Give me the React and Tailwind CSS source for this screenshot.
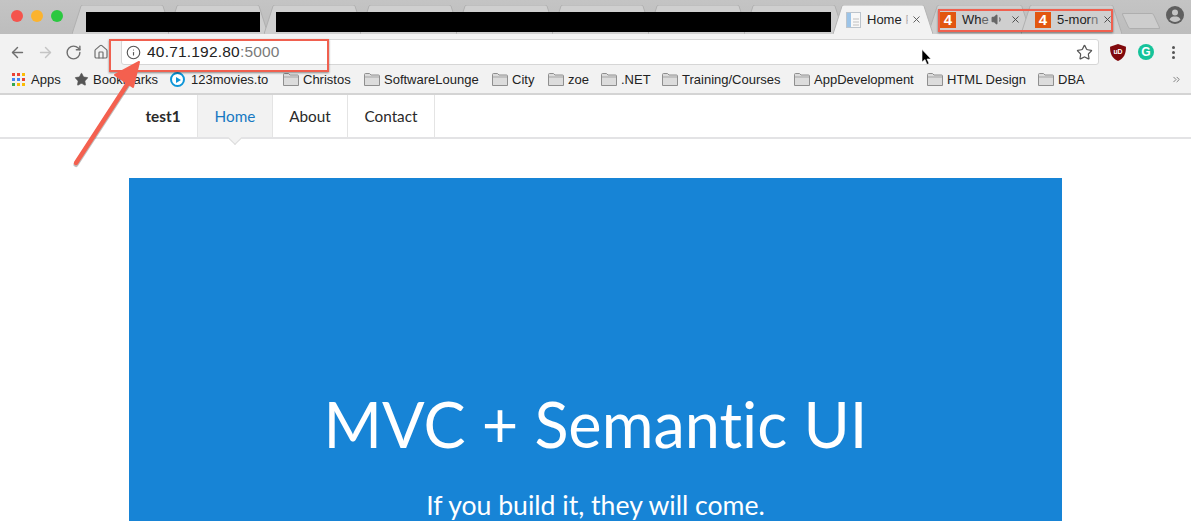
import { ArrowLeft, ArrowRight, RotateCw, Home, Star, X, Volume1, Info, ChevronsRight } from 'lucide-react';

const chromeFont = '[font-family:"Liberation_Sans",Arial,sans-serif]';

function TabShape({ active }) {
  return (
    <svg className="absolute inset-0 h-full w-full" viewBox="0 0 100 28" preserveAspectRatio="none">
      <path d="M0 28 L9 1 Q9.500 0 11 0 L89 0 Q90.500 0 91 1 L100 28" fill={active ? '#f2f2f2' : '#cfcfcf'} stroke={active ? '#b4b4b4' : '#b0b0b0'} strokeWidth="1" vectorEffect="non-scaling-stroke" />
    </svg>
  );
}

function FourIcon() {
  return <span className="flex h-4 w-4 shrink-0 items-center justify-center bg-[#e2560f] text-[15px] leading-none font-bold text-white">4</span>;
}

function Bookmark({ children, width }) {
  return (
    <div className="flex items-center gap-[4px] whitespace-nowrap" style={{ width }}>
      <svg width="16" height="13" viewBox="0 0 16 13" className="shrink-0">
        <path d="M.5 12.500V1.500q0-1 1-1h4l1.500 1.500h7.500q1 0 1 1v9.500z" fill="#dcdcdc" stroke="#8f8f8f" />
        <path d="M1 4h14" stroke="#a5a5a5" />
      </svg>
      <span>{children}</span>
    </div>
  );
}

function NavItem({ children, active, className = '' }) {
  return (
    <div className={`flex h-full items-center justify-center border-r border-[#e4e4e4] text-[15.300px] ${active ? 'relative bg-[#f2f2f2] text-[#1678c2]' : 'text-[#2a2a2a]'} ${className}`}>
      {children}
      {active && <span className="absolute -bottom-[6px] left-1/2 h-[10px] w-[10px] -translate-x-1/2 rotate-45 border-r border-b border-[#dddddd] bg-[#f2f2f2]" />}
    </div>
  );
}

export default function App() {
  return (
    <div className={`relative h-[521px] w-[1191px] overflow-hidden bg-white ${chromeFont}`}>
      {/* tab strip */}
      <div className="flex h-[34px] items-end bg-gradient-to-b from-[#c4c4c4] to-[#bdbdbd]">
        <div className="flex h-full w-[72px] shrink-0 items-start gap-[8px] pt-[10px] pl-[11px]">
          <span className="h-[12px] w-[12px] rounded-full bg-[#f4544d]" />
          <span className="h-[12px] w-[12px] rounded-full bg-[#fbb32f]" />
          <span className="h-[12px] w-[12px] rounded-full bg-[#2bc840]" />
        </div>
        <div className="flex w-[761px] shrink-0">
          {[0, 1, 2, 3, 4, 5, 6, 7].map((i) => (
            <div key={i} className={`relative h-[29px] w-[100px] shrink-0 ${i > 0 ? '-ml-[4px]' : ''}`}>
              <TabShape />
            </div>
          ))}
        </div>
        <div className="relative z-10 h-[29px] w-[100px] shrink-0">
          <TabShape active />
          <div className="relative flex h-full items-center pl-[13px] text-[13px] text-[#222]">
            <svg width="15" height="16" viewBox="0 0 15 16" className="shrink-0">
              <rect x=".5" y=".5" width="14" height="15" fill="#f8f8f8" stroke="#bcc4cc" />
              <rect x="1" y="1" width="4" height="14" fill="#9cc4e8" />
              <path d="M7 7h6M7 10h6M7 13h6" stroke="#c0c0c0" />
            </svg>
            <span className="ml-[6px] w-[41px] overflow-hidden whitespace-nowrap">Home <span className="text-[#bbb]">P</span></span>
            <X size={11} strokeWidth={2} className="ml-[3px] text-[#555]" />
          </div>
        </div>
        <div className="relative -ml-[5px] h-[29px] w-[103px] shrink-0">
          <TabShape />
          <div className="relative flex h-full items-center pl-[12px] text-[13px] text-[#222]">
            <FourIcon />
            <span className="ml-[6px] w-[24px] whitespace-nowrap">Wh<span className="text-[#666]">e</span></span>
            <Volume1 size={13} className="ml-[5px] text-[#666]" fill="#666" />
            <X size={11} strokeWidth={2} className="ml-[6px] text-[#444]" />
          </div>
        </div>
        <div className="relative -ml-[10px] h-[29px] w-[101px] shrink-0">
          <TabShape />
          <div className="relative flex h-full items-center pl-[14px] text-[13px] text-[#222]">
            <FourIcon />
            <span className="ml-[6px] w-[42px] whitespace-nowrap">5-mor<span className="text-[#777]">n</span></span>
            <X size={11} strokeWidth={2} className="ml-[3px] text-[#444]" />
          </div>
        </div>
        <div className="mb-[5px] ml-[3px] h-[16px] w-[32px] shrink-0 skew-x-[25deg] rounded-[2px] border border-[#aeaeae] bg-[#cdcdcd]" />
        <svg width="18" height="18" viewBox="0 0 18 18" className="mb-[10px] ml-[9px] shrink-0">
          <circle cx="9" cy="9" r="9" fill="#5f5f5f" />
          <circle cx="9" cy="6.500" r="3" fill="#c4c4c4" />
          <path d="M3.500 13.500c1-2.500 3-3 5.500-3s4.500.5 5.500 3c-1.300 1.500-3.300 2.500-5.500 2.500s-4.200-1-5.500-2.500z" fill="#c4c4c4" />
        </svg>
      </div>

      {/* toolbar */}
      <div className="flex h-[32px] items-center bg-[#f2f2f2] pt-[4px] pl-[9px] text-[#6f6f6f]">
        <ArrowLeft size={17} strokeWidth={2} className="shrink-0" />
        <ArrowRight size={17} strokeWidth={2} className="ml-[11px] shrink-0 text-[#c4c4c4]" />
        <RotateCw size={17} strokeWidth={2} className="ml-[11px] shrink-0" />
        <Home size={16} strokeWidth={1.8} className="ml-[11px] shrink-0" />
        <div className="ml-[12px] flex h-[26px] w-[978px] shrink-0 items-center rounded-[3px] border border-[#d6d6d6] bg-white pl-[4px]">
          <Info size={15} strokeWidth={1.8} className="shrink-0 text-[#555]" />
          <span className="ml-[6px] text-[15.500px] tracking-[0.2px] text-[#222]">40.71.192.80<span className="text-[#7a7a7a]">:5000</span></span>
          <Star size={17} strokeWidth={1.7} className="mr-[5px] ml-auto text-[#555]" />
        </div>
        <svg width="16" height="17" viewBox="0 0 15 16" className="ml-[11px] shrink-0">
          <path d="M7.500 0L15 2.500c0 7-2 11-7.500 13.500C2 13.500 0 9.500 0 2.500z" fill="#80090d" />
          <text x="7.500" y="9.500" textAnchor="middle" fontSize="6.500" fontWeight="700" fill="#fff">uD</text>
        </svg>
        <span className="ml-[12px] flex h-4 w-4 shrink-0 items-center justify-center rounded-full bg-[#15c39a]">
          <span className="text-[12px] leading-none font-bold text-white">G</span>
        </span>
        <span className="ml-[18px] flex shrink-0 flex-col gap-[2px]">
          <span className="h-[3px] w-[3px] rounded-full bg-[#555]" />
          <span className="h-[3px] w-[3px] rounded-full bg-[#555]" />
          <span className="h-[3px] w-[3px] rounded-full bg-[#555]" />
        </span>
      </div>

      {/* bookmarks */}
      <div className="flex h-[29px] items-center border-b-2 border-[#d4d4d4] bg-[#f2f2f2] pl-[12px] text-[13px] text-[#222]">
        <div className="flex w-[62px] shrink-0 items-center gap-[6px]">
          <div className="grid grid-cols-3 gap-[2px]">
            {['#ea4335', '#ea4335', '#fbbc05', '#4285f4', '#4285f4', '#ea4335', '#34a853', '#fbbc05', '#fbbc05'].map((c, i) => (
              <span key={i} className="h-[3px] w-[3px]" style={{ backgroundColor: c }} />
            ))}
          </div>
          <span>Apps</span>
        </div>
        <div className="flex w-[96px] shrink-0 items-center gap-[4px]">
          <Star size={15} fill="#555" strokeWidth={1} className="text-[#555]" />
          <span>Bookmarks</span>
        </div>
        <div className="flex w-[113px] shrink-0 items-center gap-[6px]">
          <span className="flex h-[15px] w-[15px] items-center justify-center rounded-full border-[2.500px] border-[#0d95d8] bg-white">
            <span className="ml-[1px] h-0 w-0 border-y-[3px] border-l-[5px] border-y-transparent border-l-[#0d95d8]" />
          </span>
          <span>123movies.to</span>
        </div>
        <Bookmark width={81}>Christos</Bookmark>
        <Bookmark width={128}>SoftwareLounge</Bookmark>
        <Bookmark width={56}>City</Bookmark>
        <Bookmark width={53}>zoe</Bookmark>
        <Bookmark width={61}>.NET</Bookmark>
        <Bookmark width={132}>Training/Courses</Bookmark>
        <Bookmark width={133}>AppDevelopment</Bookmark>
        <Bookmark width={111}>HTML Design</Bookmark>
        <Bookmark width={133}>DBA</Bookmark>
        <ChevronsRight size={11} className="text-[#777]" />
      </div>

      {/* page */}
      <div className="[font-family:Lato,sans-serif]">
        <div className="flex h-[44px] items-stretch border-b-2 border-[#e3e3e5] pl-[129px]">
          <NavItem className="w-[69px] font-bold">test1</NavItem>
          <NavItem active className="w-[75px]">Home</NavItem>
          <NavItem className="w-[75px]">About</NavItem>
          <NavItem className="w-[87px]">Contact</NavItem>
        </div>
        <div className="mx-auto mt-[39px] flex h-[400px] w-[933px] flex-col items-center bg-[#1784d6] pt-[201px] text-white [font-variant-ligatures:none]">
          <h1 className="text-[63px] leading-[90px] whitespace-nowrap">MVC + Semantic UI</h1>
          <p className="mt-[19px] text-[26.600px] leading-[34px] whitespace-nowrap">If you build it, they will come.</p>
        </div>
      </div>

      {/* redactions and annotations lying over the shot */}
      <div className="absolute top-[12px] left-[86px] h-[20px] w-[174px] bg-black" />
      <div className="absolute top-[12px] left-[276px] h-[20px] w-[555px] bg-black" />
      <div className="absolute top-[39px] left-[109px] h-[33px] w-[220px] border-2 border-[#f0604f] shadow-[0_1px_2px_rgba(0,0,0,0.45)]" />
      <div className="absolute top-[9px] left-[938px] h-[23px] w-[175px] border-2 border-[#f0604f] shadow-[0_1px_2px_rgba(0,0,0,0.45)]" />
      <svg className="absolute top-[60px] left-[65px]" width="85" height="110" viewBox="0 0 85 110">
        <path d="M11 103L65 20" stroke="#000" strokeOpacity=".25" strokeWidth="5" strokeLinecap="round" transform="translate(0 1.500)" />
        <path d="M11 103L65 20" stroke="#f4604f" strokeWidth="4.500" strokeLinecap="round" />
        <path d="M74 2L50 15L68 27z" fill="#f4604f" stroke="#f4604f" strokeWidth="2" strokeLinejoin="round" />
      </svg>
      <svg className="absolute top-[49px] left-[921px]" width="11" height="17" viewBox="0 0 11 17">
        <path d="M1 0.500V13L4 10.500L6 15.500L8 14.500L6 10H10z" fill="#000" stroke="#fff" strokeWidth=".6" />
      </svg>
    </div>
  );
}
